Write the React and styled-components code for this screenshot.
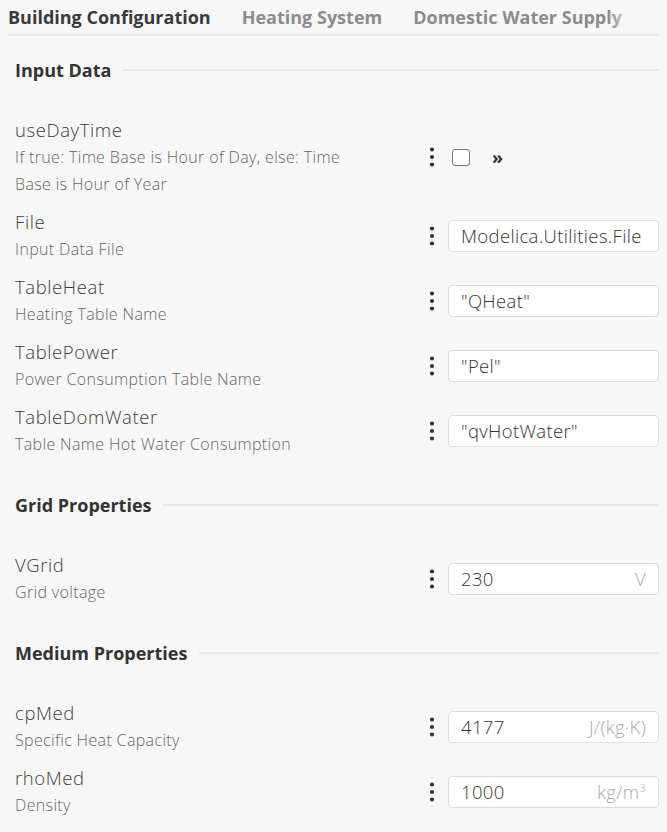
import styled, { createGlobalStyle } from "styled-components";

const GlobalStyle = createGlobalStyle`
  html, body {
    margin: 0;
    padding: 0;
    background: #f7f7f7;
  }
  body {
    font-family: "Open Sans", "Noto Sans", sans-serif;
    color: #333;
  }
  * { box-sizing: border-box; }
`;

const sections = [
  {
    title: "Input Data",
    params: [
      { name: "useDayTime", desc: "If true: Time Base is Hour of Day, else: Time Base is Hour of Year", kind: "bool" },
      { name: "File", desc: "Input Data File", value: "Modelica.Utilities.File" },
      { name: "TableHeat", desc: "Heating Table Name", value: "\"QHeat\"" },
      { name: "TablePower", desc: "Power Consumption Table Name", value: "\"Pel\"" },
      { name: "TableDomWater", desc: "Table Name Hot Water Consumption", value: "\"qvHotWater\"" },
    ],
  },
  {
    title: "Grid Properties",
    params: [{ name: "VGrid", desc: "Grid voltage", value: "230", unit: "V" }],
  },
  {
    title: "Medium Properties",
    params: [
      { name: "cpMed", desc: "Specific Heat Capacity", value: "4177", unit: "J/(kg·K)" },
      { name: "rhoMed", desc: "Density", value: "1000", unit: <>kg/m<sup>3</sup></> },
    ],
  },
];

const tabs = ["Building Configuration", "Heating System", "Domestic Water Supply"];

const MoreIcon = () => (
  <svg width="12" height="22" viewBox="0 0 12 22">
    <circle cx="6" cy="3.5" r="2.1" fill="#333" />
    <circle cx="6" cy="11" r="2.1" fill="#333" />
    <circle cx="6" cy="18.5" r="2.1" fill="#333" />
  </svg>
);

const ParamRow = ({ p }) => (
  <Row>
    <Info>
      <Label>{p.name}</Label>
      <Desc>{p.desc}</Desc>
    </Info>
    <Controls>
      <MoreIcon />
      {p.kind === "bool" ? (
        <>
          <Checkbox />
          <Expand>»</Expand>
        </>
      ) : (
        <Field>
          <span>{p.value}</span>
          {p.unit && <Unit>{p.unit}</Unit>}
        </Field>
      )}
    </Controls>
  </Row>
);

export default function App() {
  return (
    <Page>
      <GlobalStyle />
      <TabBar>
        {tabs.map((t, i) => (
          <Tab key={t} $active={i === 0}>{t}</Tab>
        ))}
        <Fade />
      </TabBar>
      {sections.map((s) => (
        <Section key={s.title}>
          <SectionTitle>
            <span>{s.title}</span>
          </SectionTitle>
          {s.params.map((p) => (
            <ParamRow key={p.name} p={p} />
          ))}
        </Section>
      ))}
    </Page>
  );
}

const Page = styled.div`
  padding: 0 8px;
  width: 667px;
`;

const TabBar = styled.div`
  position: relative;
  display: flex;
  gap: 31px;
  height: 36px;
  border-bottom: 2px solid #e8e8e8;
  overflow: hidden;
  white-space: nowrap;
`;

const Tab = styled.div`
  font-size: 18px;
  font-weight: 700;
  line-height: 34px;
  color: ${(p) => (p.$active ? "#3a3a3a" : "#8c8c8c")};
  border-bottom: 3px solid ${(p) => (p.$active ? "#3b62d6" : "transparent")};
  height: 37px;
  flex-shrink: 0;
`;

const Fade = styled.div`
  position: absolute;
  top: 0;
  right: 12px;
  width: 38px;
  height: 32px;
  background: linear-gradient(to right, rgba(247, 247, 247, 0), #f7f7f7 70%);
`;

const Section = styled.section`
  display: flex;
  flex-direction: column;
  padding-left: 7px;

  & + & {
    margin-top: 3px;
  }
`;

const SectionTitle = styled.div`
  display: flex;
  align-items: center;
  gap: 12px;
  height: 28px;
  margin: 20px 0 32px;
  font-size: 18px;
  font-weight: 700;
  color: #333;

  &::after {
    content: "";
    flex: 1;
    height: 2px;
    background: #e8e8e8;
  }
`;

const Row = styled.div`
  display: flex;
  align-items: center;
  justify-content: space-between;
  margin-bottom: 10px;
`;

const Info = styled.div`
  width: 350px;
`;

const Label = styled.div`
  font-size: 18.5px;
  font-weight: 300;
  letter-spacing: 0.6px;
  line-height: 28px;
  color: #3c3c3c;
`;

const Desc = styled.div`
  font-size: 16px;
  font-weight: 300;
  letter-spacing: 0.35px;
  line-height: 27px;
  color: #666;
`;

const Controls = styled.div`
  display: flex;
  align-items: center;
  width: 233px;
`;

const Checkbox = styled.span`
  width: 18px;
  height: 17px;
  margin-left: 14px;
  border: 1.5px solid #777;
  border-radius: 3px;
  background: #fff;
`;

const Expand = styled.span`
  margin-left: 22px;
  font-size: 18px;
  font-weight: 700;
  line-height: 1;
  color: #333;
`;

const Field = styled.div`
  display: flex;
  align-items: center;
  justify-content: space-between;
  width: 211px;
  height: 32px;
  margin-left: 10px;
  padding: 0 12px;
  background: #fff;
  border: 1px solid #ddd;
  border-radius: 4px;
  font-size: 18.5px;
  font-weight: 300;
  letter-spacing: 0.35px;
  color: #333;
  white-space: nowrap;
`;

const Unit = styled.span`
  color: #aaa;
  letter-spacing: 0.3px;

  sup {
    font-size: 11px;
  }
`;
